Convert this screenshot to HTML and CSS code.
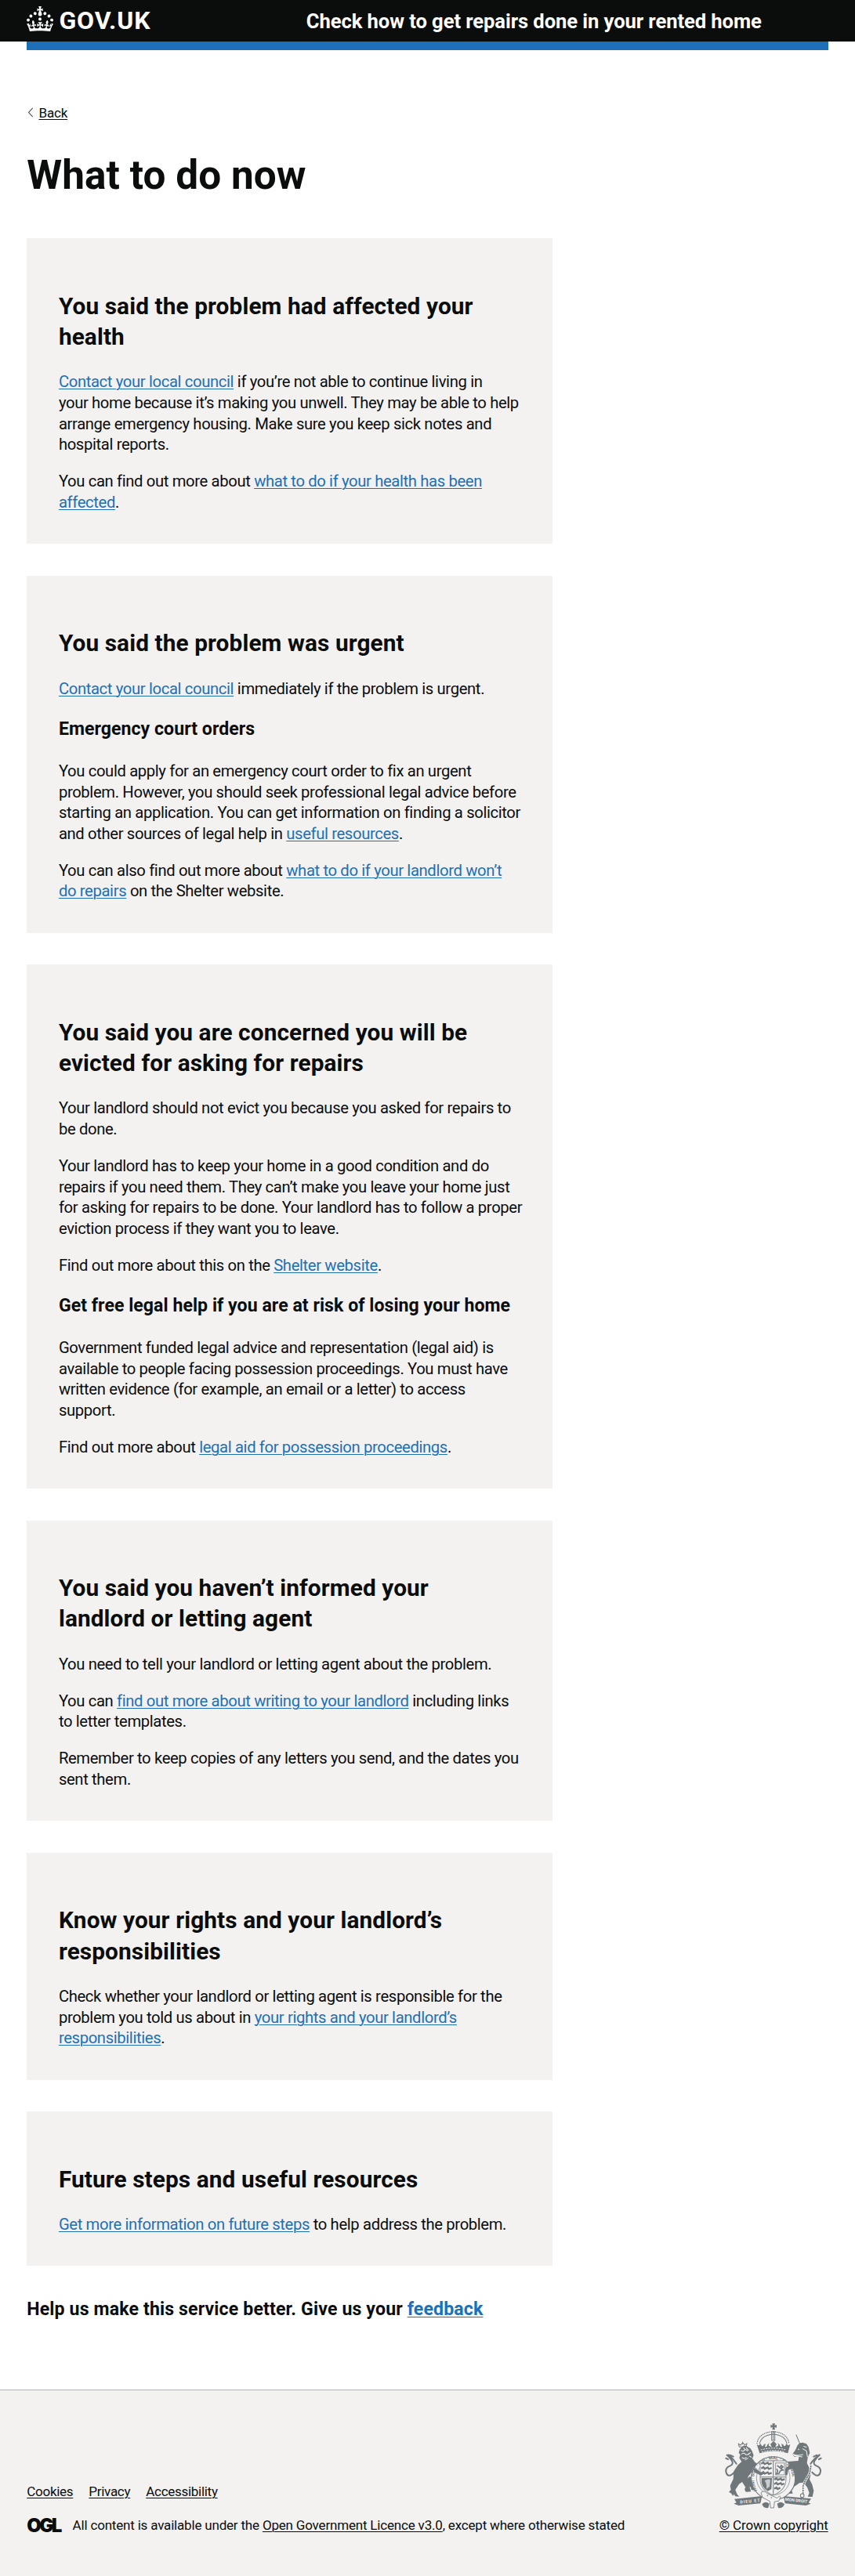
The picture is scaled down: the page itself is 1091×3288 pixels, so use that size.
FILE: index.html
```html
<!DOCTYPE html>
<html lang="en">
<head>
<meta charset="utf-8">
<title>What to do now - Check how to get repairs done in your rented home</title>
<link rel="stylesheet" href="styles.css">
</head>
<body>
<header class="header">
  <div class="container header-row">
    <a class="logo" href="#">
      <svg class="crown" viewBox="0 0 32 30" aria-hidden="true"><path fill="currentColor" d="M22.6 10.4c-1 .4-2-.1-2.4-1-.4-.9.1-2 1-2.4.9-.4 2 .1 2.4 1s-.1 2-1 2.4m-5.9 6.7c-.9.4-2-.1-2.4-1-.4-.9.1-2 1-2.4.9-.4 2 .1 2.4 1s-.1 2-1 2.4m10.8-3.7c-1 .4-2-.1-2.4-1-.4-.9.1-2 1-2.4.9-.4 2 .1 2.4 1s0 2-1 2.4m3.3 4.8c-1 .4-2-.1-2.4-1-.4-.9.1-2 1-2.4.9-.4 2 .1 2.4 1s-.1 2-1 2.4M17 4.7l2.3 1.2V2.5l-2.3.7-.2-.2.9-3h-3.4l.9 3-.2.2c-.1.1-2.3-.7-2.3-.7v3.4L15 4.7c.1.1.1.2.2.2l-1.3 4c-.1.2-.1.4-.1.6 0 1.1.8 2 1.9 2.2h.7c1-.2 1.9-1.1 1.9-2.1 0-.2 0-.4-.1-.6l-1.3-4c-.1-.2 0-.2.1-.3m-7.6 5.7c.9.4 2-.1 2.4-1 .4-.9-.1-2-1-2.4-.9-.4-2 .1-2.4 1s0 2 1 2.4m-5 3c.9.4 2-.1 2.4-1 .4-.9-.1-2-1-2.4-.9-.4-2 .1-2.4 1s.1 2 1 2.4m-3.2 4.8c.9.4 2-.1 2.4-1 .4-.9-.1-2-1-2.4-.9-.4-2 .1-2.4 1s0 2 1 2.4m14.8 11c4.4 0 8.6.3 12.3.8 1.1-4.5 2.4-7 3.7-8.8l-2.5-.9c.2 1.3.3 1.9 0 2.7-.4-.4-.8-1.1-1.1-2.3l-1.2 4c.7-.5 1.3-.8 2-.9-1.1 2.5-2.6 3.1-3.5 3-1.1-.2-1.7-1.2-1.5-2.1.3-1.2 1.5-1.5 2.1-.1 1.1-2.3-.8-3-2-2.3 1.9-1.9 2.1-3.5.6-5.6-2.1 1.6-2.1 3.2-1.2 5.5-1.2-1.4-3.2-.6-2.5 1.6.9-1.4 2.1-.5 1.9.8-.2 1.1-1.7 2.1-3.5 1.9-2.7-.2-2.9-2.1-2.9-3.6.7-.1 1.9.5 2.9 1.9l.4-4.3c-1.1 1.1-2.1 1.4-3.2 1.4.4-1.2 2.1-3 2.1-3h-5.4s1.7 1.9 2.1 3c-1.1 0-2.1-.2-3.2-1.4l.4 4.3c1-1.4 2.2-2 2.9-1.9-.1 1.5-.2 3.4-2.9 3.6-1.9.2-3.4-.8-3.5-1.9-.2-1.3 1-2.2 1.9-.8.7-2.3-1.2-3-2.5-1.6.9-2.2.9-3.9-1.2-5.5-1.5 2-1.3 3.7.6 5.6-1.2-.7-3.1 0-2 2.3.6-1.4 1.8-1.1 2.1.1.2.9-.3 1.9-1.5 2.1-.9.2-2.4-.5-3.5-3 .6 0 1.2.3 2 .9l-1.2-4c-.3 1.1-.7 1.9-1.1 2.3-.3-.8-.2-1.4 0-2.7l-2.9.9C1.3 23 2.6 25.5 3.7 30c3.7-.5 7.9-.8 12.3-.8"/></svg>
      <span class="logo-text">GOV.UK</span>
    </a>
    <a class="service" href="#">Check how to get repairs done in your rented home</a>
  </div>
</header>
<div class="container"><div class="bar"></div></div>

<div class="container main">
  <a class="back" href="#"><svg class="chevron" viewBox="0 0 8 14" aria-hidden="true"><path d="M7 1 1.3 7 7 13" fill="none" stroke="#505a5f" stroke-width="1.2"/></svg><span class="back-text">Back</span></a>
  <h1>What to do now</h1>

  <section class="card">
    <h2>You said the problem had affected your<br>health</h2>
    <p><a href="#">Contact your local council</a> if you’re not able to continue living in<br>your home because it’s making you unwell. They may be able to help<br>arrange emergency housing. Make sure you keep sick notes and<br>hospital reports.</p>
    <p>You can find out more about <a href="#">what to do if your health has been<br>affected</a>.</p>
  </section>

  <section class="card">
    <h2>You said the problem was urgent</h2>
    <p><a href="#">Contact your local council</a> immediately if the problem is urgent.</p>
    <h3>Emergency court orders</h3>
    <p>You could apply for an emergency court order to fix an urgent<br>problem. However, you should seek professional legal advice before<br>starting an application. You can get information on finding a solicitor<br>and other sources of legal help in <a href="#">useful resources</a>.</p>
    <p>You can also find out more about <a href="#">what to do if your landlord won’t<br>do repairs</a> on the Shelter website.</p>
  </section>

  <section class="card">
    <h2>You said you are concerned you will be<br>evicted for asking for repairs</h2>
    <p>Your landlord should not evict you because you asked for repairs to<br>be done.</p>
    <p>Your landlord has to keep your home in a good condition and do<br>repairs if you need them. They can’t make you leave your home just<br>for asking for repairs to be done. Your landlord has to follow a proper<br>eviction process if they want you to leave.</p>
    <p>Find out more about this on the <a href="#">Shelter website</a>.</p>
    <h3>Get free legal help if you are at risk of losing your home</h3>
    <p>Government funded legal advice and representation (legal aid) is<br>available to people facing possession proceedings. You must have<br>written evidence (for example, an email or a letter) to access<br>support.</p>
    <p>Find out more about <a href="#">legal aid for possession proceedings</a>.</p>
  </section>

  <section class="card">
    <h2>You said you haven’t informed your<br>landlord or letting agent</h2>
    <p>You need to tell your landlord or letting agent about the problem.</p>
    <p>You can <a href="#">find out more about writing to your landlord</a> including links<br>to letter templates.</p>
    <p>Remember to keep copies of any letters you send, and the dates you<br>sent them.</p>
  </section>

  <section class="card">
    <h2>Know your rights and your landlord’s<br>responsibilities</h2>
    <p>Check whether your landlord or letting agent is responsible for the<br>problem you told us about in <a href="#">your rights and your landlord’s<br>responsibilities</a>.</p>
  </section>

  <section class="card">
    <h2>Future steps and useful resources</h2>
    <p><a href="#">Get more information on future steps</a> to help address the problem.</p>
  </section>

  <h3 class="feedback">Help us make this service better. Give us your <a href="#">feedback</a></h3>
</div>

<footer class="footer">
  <div class="container footer-row">
    <div class="footer-meta">
      <nav class="footer-links"><a href="#">Cookies</a><a href="#">Privacy</a><a href="#">Accessibility</a></nav>
      <div class="licence"><span class="ogl">OGL</span><span>All content is available under the <a href="#">Open Government Licence v3.0</a>, except where otherwise stated</span></div>
    </div>
    <div class="copyright">
      <svg class="crest" viewBox="48 40 371 329" aria-hidden="true">
        <g fill="#6f777b" stroke="none">
          <!-- crown -->
          <path d="M229 41h11l-2 7 8-2v11l-8-2 2 10h-11l2-10-8 2V46l8 2z"/>
          <path d="M170 121q10 8 14-3l6 10q6 0 7-7l7-2-3 11q8 3 9-7l8-8-3 10q4 6 12 5l-5-10 12-12 12 12-5 10q8 1 12-5l-3-10 8 8q1 10 9 7l-3-11 7 2q1 7 7 7l6-10q4 11 14 3l-9 34q-53-17-108 0z"/>
          <!-- lion -->
          <path d="M105 140l8-9 9-6 12 4 12 8 6 10 6 16-5 12 10 14 25 16-3 12-27-8-7 18-14 17-2 22 8 20 5 16-20 1-5-10 4-8-13-20-12 8-14 22 6 16 9 10-15-1-5-8-5 6-5-9-10-6 8-8-3-16 12-25 2-30 16-24 14-13-9-14 4-12-6-8z"/>
          <path d="M128 262l14-18 8 2 3 20 12 16-4 15-12-2-2-10-8-2z"/>
          <!-- unicorn -->
          <path d="M326 124l8-8 12-2 14 5 8 12 5 22-8 18-3 22 8 16 6 28-4 18 10 20 6 24-5 23-18-1 6-14-8-22-14-18-16 2-20 14-9 16 4 10-18 1-6-12 8-6 14-32 10-26-19-16-15 8-10-8 4-12-3-10 14-9 42-3 2-18-18 2-7-10 8-10 5-8z"/>
          <!-- scroll -->
          <path d="M84 330l106-11-6 28-84 8-18-7 10-4zM378 329l-106-10 6 28 80 8 19-7-9-4z"/>
          <path d="M190 350q12-14 28-2l-4 16q-18 4-24-14zM276 350q-12-14-28-2l4 16q18 4 24-14z"/>
        </g>
        <g fill="none" stroke="#6f777b" stroke-linecap="round">
          <path d="M171 117q6-41 62-45 54 4 60 45" stroke-width="4" stroke-dasharray="1 6"/>
          <path d="M181 118q6-32 52-36 46 4 52 36" stroke-width="3"/>
          <path d="M227 72h12v34h-12z" stroke-width="3"/><path d="M233 76v28" stroke-width="5" stroke-dasharray="1 7"/>
          <path d="M84 228q-22 22-30 4-8-20 14-29 15-7 6-21-10-14-18-20M92 195q-10-16-30-34M60 178l-8-4M80 168l-12-6" stroke-width="6"/>
          <path d="M382 228q22 22 30 4 8-20-14-29-15-7-6-21 10-14 18-20M376 195q10-16 34-34M408 178l8-4M388 168l12-6" stroke-width="6"/>
          <path d="M321 85l14 34" stroke-width="3"/>
          <path d="M377 204q-2 26-12 40t-18 36v28" stroke="#f3f2f1" stroke-width="9"/>
          <path d="M377 204q-2 26-12 40t-18 36v28" stroke-width="5" stroke-dasharray="3 6"/>
          <circle cx="344" cy="317" r="7" stroke-width="3"/>
          <path d="M103 131l-3-12 8 5 8-10 8 9 8-5-3 13zM116 112v8" stroke-width="3"/>
        </g>
        <g stroke="#f3f2f1" stroke-width="3" fill="none" stroke-linecap="round">
          <path d="M110 144q7 6 12 0t12 2M112 158q8-7 14 0t14-2M114 172q8 6 16-1M130 134l8 10M146 152l-8 8M120 134l4 6M126 180l10-6M142 166l8 4"/>
          <path d="M306 156q14 12 40 4M346 138l14 8 4 22M328 140h4M310 163l34 6M350 128l10 4"/>
          <path d="M186 142q48-14 94 0M190 150q44-12 87 0" stroke-dasharray="4 6"/>
        </g>
        <!-- garter and shield -->
        <ellipse cx="233" cy="251" rx="84" ry="83" fill="#f3f2f1" stroke="#6f777b" stroke-width="3"/>
        <ellipse cx="233" cy="249" rx="64" ry="66" fill="#f3f2f1" stroke="#6f777b" stroke-width="2"/>
        <path id="garter" d="M172 297a74 76 0 1 1 122 0" fill="none"/>
        <text class="garter-text"><textPath href="#garter">HONI · SOIT · QUI · MAL · Y · PENSE</textPath></text>
        <path d="M183 184h99v70q0 42-49 62-50-20-50-62z" fill="#f3f2f1" stroke="#8b9296" stroke-width="3"/>
        <path d="M233 184v132M183 246h99" stroke="#8b9296" stroke-width="4"/>
        <g fill="none" stroke="#6f777b" stroke-width="7">
          <path d="M187 195l8-5 5 6 12-5 4 6 11-4M187 213l8-5 5 6 12-5 4 6 11-4M187 232l8-5 5 6 12-5 4 6 11-4"/>
          <path d="M237 256l8-5 5 6 12-5 4 6 11-4M237 273l8-5 5 6 12-5 4 6 9-4M237 291l8-5 5 6 10-5"/>
          <path d="M248 202l10 8 6-8 6 5-8 7 8 5-10 3-5 10-10 2 5-11-4-9" stroke-width="5"/>
        </g>
        <path d="M242 192h34v46h-34z" fill="none" stroke="#8b9296" stroke-width="3"/>
        <path d="M188 250h40l-2 42-14 8q-22-14-24-34z" fill="#6f777b"/>
        <path d="M200 260q18-10 22-2l-3 25-12 8q2-20-7-31z" fill="#c9ccce"/>
        <path d="M154 210l16 6 16 12 14 4-14 8-24-12zM318 206l-16 8-12 6-3 18-8 2v-26l20-18z" fill="#6f777b"/>
        <path d="M186 306q12-12 24 3l38 18q9-12 14-5l-8 16-16 2-3 24h-12l-3-25-28-15z" fill="#f3f2f1" stroke="#6f777b" stroke-width="2.500"/>
        <circle cx="211" cy="317" r="2.500" fill="#6f777b"/><circle cx="226" cy="325" r="2.500" fill="#6f777b"/>
        <text class="motto" x="106" y="344" textLength="76" transform="rotate(-5 144 338)">DIEU ET</text>
        <text class="motto" x="278" y="341" textLength="86" transform="rotate(6 320 337)">MON DROIT</text>
      </svg>
      <a href="#">© Crown copyright</a>
    </div>
  </div>
</footer>
</body>
</html>
```
FILE: styles.css
```css
* { box-sizing: border-box; }
body {
  margin: 0;
  background: #fff;
  color: #0b0c0c;
  font-family: Roboto, "Liberation Sans", sans-serif;
  font-size: 20.24px;
  line-height: 26.64px;
  letter-spacing: -0.36px;
}
a {
  color: #1d70b8;
  text-decoration-line: underline;
  text-decoration-thickness: 1.2px;
  text-underline-offset: 2.4px;
}
.container { width: 1022.4px; margin: 0 auto; }

.header { background: #0b0c0c; height: 53.2px; color: #fff; }
.header a { color: #fff; text-decoration: none; }
.header-row { display: flex; align-items: flex-start; }
.logo { display: flex; width: 356.5px; padding-top: 7.6px; }
.crown { width: 34.1px; height: 32px; display: block; }
.logo-text {
  margin-left: 7px;
  font-size: 32px;
  line-height: 37px;
  font-weight: 700;
  letter-spacing: 0.9px;
}
.service {
  padding-top: 12.6px;
  font-size: 25.6px;
  line-height: 28px;
  font-weight: 700;
  letter-spacing: -0.08px;
}
.bar { height: 10.7px; background: #1d70b8; }

.main { padding-top: 70px; }
.back {
  display: flex;
  align-items: center;
  width: max-content;
  font-size: 17.05px;
  line-height: 20px;
  letter-spacing: -0.2px;
  color: #0b0c0c;
  text-decoration: none;
}
.chevron { width: 8px; height: 13px; margin: 0 6.2px 0 1px; }
.back-text {
  text-decoration: underline;
  text-decoration-thickness: 1.2px;
  text-underline-offset: 2.4px;
}
h1 {
  margin: 43.6px 0 53.8px;
  font-size: 51.3px;
  line-height: 53px;
  letter-spacing: 0.05px;
}
.card {
  width: 670.6px;
  margin-bottom: 40.6px;
  padding: 66.4px 0 39.6px 40.6px;
  background: #f3f2f1;
  white-space: nowrap;
}
h2 {
  margin: 0 0 25.2px;
  font-size: 29.8px;
  line-height: 39.3px;
  letter-spacing: 0.1px;
}
p { margin: 0 0 20.3px; }
.card p:last-child { margin-bottom: 0; }
h3 {
  margin: 24.9px 0 25.7px;
  font-size: 23.1px;
  line-height: 28px;
  letter-spacing: 0.04px;
}
.feedback { margin: 42px 0 0; letter-spacing: 0.14px; }

.footer {
  margin-top: 87.5px;
  height: 238px;
  border-top: 1.07px solid #b1b4b6;
  background: #f3f2f1;
  font-size: 17.05px;
  line-height: 21px;
  letter-spacing: -0.2px;
}
.footer a { color: #0b0c0c; }
.footer-row {
  display: flex;
  justify-content: space-between;
  align-items: flex-end;
  padding-top: 42px;
}
.footer-links {
  display: flex;
  gap: 20px;
  margin-bottom: 21.5px;
  letter-spacing: -0.3px;
}
.licence { display: flex; align-items: center; }
.ogl {
  width: 58.3px;
  font-family: Inter, sans-serif;
  font-size: 24px;
  line-height: 21px;
  font-weight: 900;
  letter-spacing: -2.6px;
}
.copyright { display: flex; flex-direction: column; align-items: center; letter-spacing: -0.12px; }
.crest { width: 123.7px; height: 109.7px; margin-bottom: 10.5px; }
.garter-text {
  font: 700 17px Roboto, sans-serif;
  letter-spacing: 0;
  fill: #6f777b;
}
.motto {
  font: 700 16px Roboto, sans-serif;
  letter-spacing: 0;
  fill: #f3f2f1;
}
```
